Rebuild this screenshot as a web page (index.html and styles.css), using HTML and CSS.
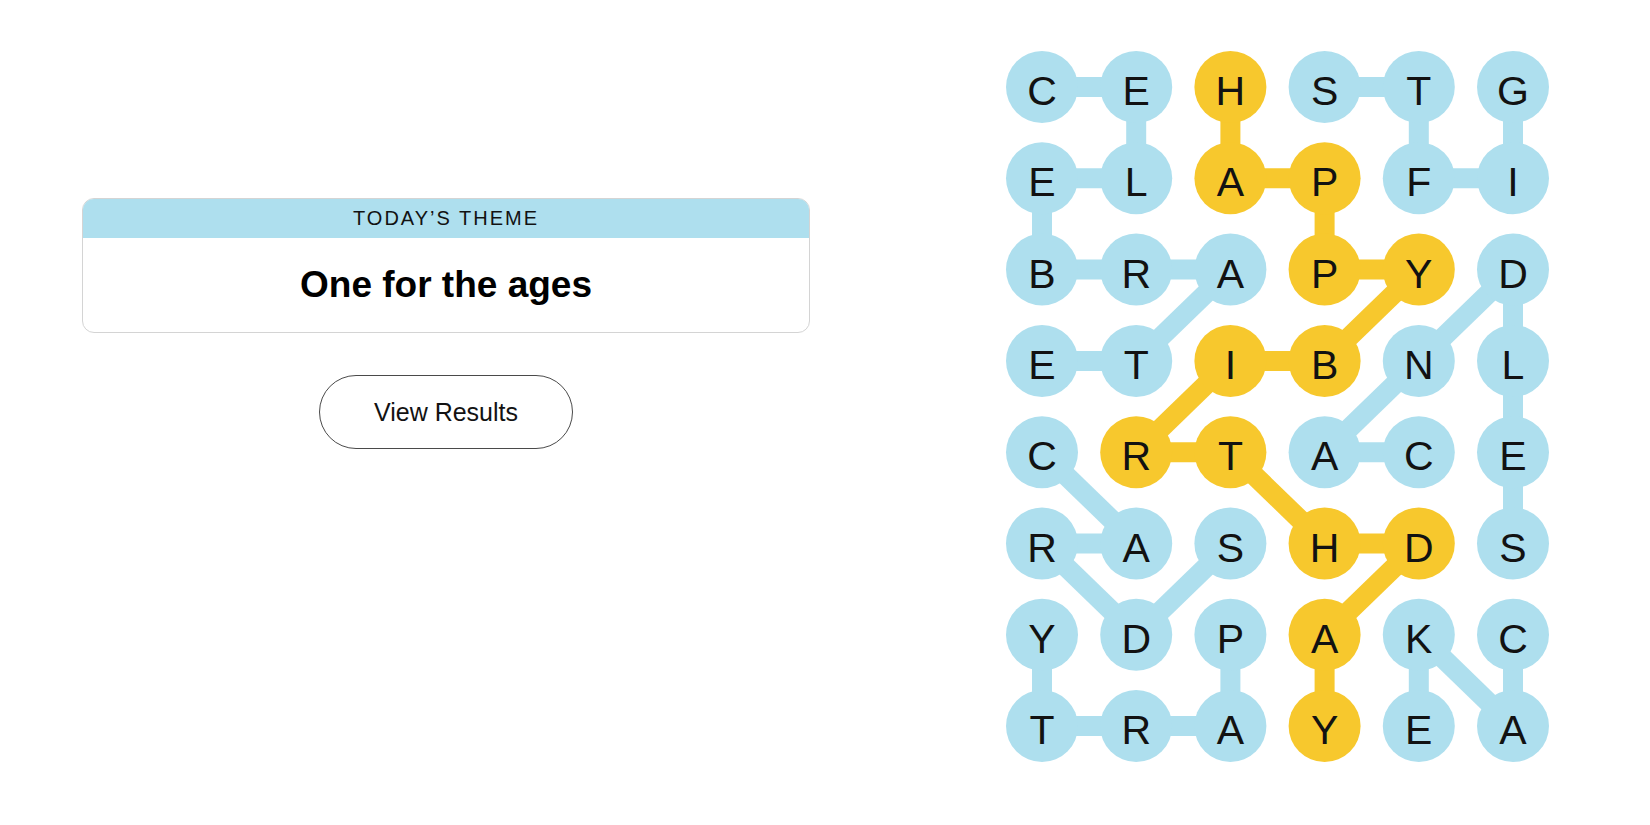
FILE: index.html
```html
<!DOCTYPE html>
<html lang="en">
<head>
<meta charset="utf-8">
<title>Strands</title>
<link rel="stylesheet" href="styles.css">
</head>
<body>
<main class="page">
  <section class="panel">
    <div class="theme-card">
      <div class="theme-head">TODAY’S THEME</div>
      <div class="theme-body">One for the ages</div>
    </div>
    <div class="actions">
      <button class="results-btn" type="button">View Results</button>
    </div>
  </section>
  <section class="board">
    <svg class="board-svg" width="560" height="730" viewBox="1000 45 560 730" xmlns="http://www.w3.org/2000/svg">
      <g class="links-blue">
        <!-- CELEBRATE -->
        <line x1="1042" y1="87" x2="1136.2" y2="87"/>
        <line x1="1136.2" y1="87" x2="1136.2" y2="178.3"/>
        <line x1="1136.2" y1="178.3" x2="1042" y2="178.3"/>
        <line x1="1042" y1="178.3" x2="1042" y2="269.6"/>
        <line x1="1042" y1="269.6" x2="1230.4" y2="269.6"/>
        <line x1="1230.4" y1="269.6" x2="1136.2" y2="360.9"/>
        <line x1="1136.2" y1="360.9" x2="1042" y2="360.9"/>
        <!-- GIFTS -->
        <line x1="1513" y1="87" x2="1513" y2="178.3"/>
        <line x1="1513" y1="178.3" x2="1418.8" y2="178.3"/>
        <line x1="1418.8" y1="178.3" x2="1418.8" y2="87"/>
        <line x1="1418.8" y1="87" x2="1324.6" y2="87"/>
        <!-- CANDLES -->
        <line x1="1418.8" y1="452.2" x2="1324.6" y2="452.2"/>
        <line x1="1324.6" y1="452.2" x2="1418.8" y2="360.9"/>
        <line x1="1418.8" y1="360.9" x2="1513" y2="269.6"/>
        <line x1="1513" y1="269.6" x2="1513" y2="543.5"/>
        <!-- CARDS -->
        <line x1="1042" y1="452.2" x2="1136.2" y2="543.5"/>
        <line x1="1136.2" y1="543.5" x2="1042" y2="543.5"/>
        <line x1="1042" y1="543.5" x2="1136.2" y2="634.8"/>
        <line x1="1136.2" y1="634.8" x2="1230.4" y2="543.5"/>
        <!-- PARTY -->
        <line x1="1230.4" y1="634.8" x2="1230.4" y2="726.1"/>
        <line x1="1230.4" y1="726.1" x2="1042" y2="726.1"/>
        <line x1="1042" y1="726.1" x2="1042" y2="634.8"/>
        <!-- CAKE -->
        <line x1="1513" y1="634.8" x2="1513" y2="726.1"/>
        <line x1="1513" y1="726.1" x2="1418.8" y2="634.8"/>
        <line x1="1418.8" y1="634.8" x2="1418.8" y2="726.1"/>
      </g>
      <g class="links-gold">
        <line x1="1230.4" y1="87" x2="1230.4" y2="178.3"/>
        <line x1="1230.4" y1="178.3" x2="1324.6" y2="178.3"/>
        <line x1="1324.6" y1="178.3" x2="1324.6" y2="269.6"/>
        <line x1="1324.6" y1="269.6" x2="1418.8" y2="269.6"/>
        <line x1="1418.8" y1="269.6" x2="1324.6" y2="360.9"/>
        <line x1="1324.6" y1="360.9" x2="1230.4" y2="360.9"/>
        <line x1="1230.4" y1="360.9" x2="1136.2" y2="452.2"/>
        <line x1="1136.2" y1="452.2" x2="1230.4" y2="452.2"/>
        <line x1="1230.4" y1="452.2" x2="1324.6" y2="543.5"/>
        <line x1="1324.6" y1="543.5" x2="1418.8" y2="543.5"/>
        <line x1="1418.8" y1="543.5" x2="1324.6" y2="634.8"/>
        <line x1="1324.6" y1="634.8" x2="1324.6" y2="726.1"/>
      </g>
      <g class="cells">
        <!-- row 0 -->
        <circle class="blue" cx="1042" cy="87" r="36"/><text x="1042" y="105">C</text>
        <circle class="blue" cx="1136.2" cy="87" r="36"/><text x="1136.2" y="105">E</text>
        <circle class="gold" cx="1230.4" cy="87" r="36"/><text x="1230.4" y="105">H</text>
        <circle class="blue" cx="1324.6" cy="87" r="36"/><text x="1324.6" y="105">S</text>
        <circle class="blue" cx="1418.8" cy="87" r="36"/><text x="1418.8" y="105">T</text>
        <circle class="blue" cx="1513" cy="87" r="36"/><text x="1513" y="105">G</text>
        <!-- row 1 -->
        <circle class="blue" cx="1042" cy="178.3" r="36"/><text x="1042" y="196.3">E</text>
        <circle class="blue" cx="1136.2" cy="178.3" r="36"/><text x="1136.2" y="196.3">L</text>
        <circle class="gold" cx="1230.4" cy="178.3" r="36"/><text x="1230.4" y="196.3">A</text>
        <circle class="gold" cx="1324.6" cy="178.3" r="36"/><text x="1324.6" y="196.3">P</text>
        <circle class="blue" cx="1418.8" cy="178.3" r="36"/><text x="1418.8" y="196.3">F</text>
        <circle class="blue" cx="1513" cy="178.3" r="36"/><text x="1513" y="196.3">I</text>
        <!-- row 2 -->
        <circle class="blue" cx="1042" cy="269.6" r="36"/><text x="1042" y="287.6">B</text>
        <circle class="blue" cx="1136.2" cy="269.6" r="36"/><text x="1136.2" y="287.6">R</text>
        <circle class="blue" cx="1230.4" cy="269.6" r="36"/><text x="1230.4" y="287.6">A</text>
        <circle class="gold" cx="1324.6" cy="269.6" r="36"/><text x="1324.6" y="287.6">P</text>
        <circle class="gold" cx="1418.8" cy="269.6" r="36"/><text x="1418.8" y="287.6">Y</text>
        <circle class="blue" cx="1513" cy="269.6" r="36"/><text x="1513" y="287.6">D</text>
        <!-- row 3 -->
        <circle class="blue" cx="1042" cy="360.9" r="36"/><text x="1042" y="378.9">E</text>
        <circle class="blue" cx="1136.2" cy="360.9" r="36"/><text x="1136.2" y="378.9">T</text>
        <circle class="gold" cx="1230.4" cy="360.9" r="36"/><text x="1230.4" y="378.9">I</text>
        <circle class="gold" cx="1324.6" cy="360.9" r="36"/><text x="1324.6" y="378.9">B</text>
        <circle class="blue" cx="1418.8" cy="360.9" r="36"/><text x="1418.8" y="378.9">N</text>
        <circle class="blue" cx="1513" cy="360.9" r="36"/><text x="1513" y="378.9">L</text>
        <!-- row 4 -->
        <circle class="blue" cx="1042" cy="452.2" r="36"/><text x="1042" y="470.2">C</text>
        <circle class="gold" cx="1136.2" cy="452.2" r="36"/><text x="1136.2" y="470.2">R</text>
        <circle class="gold" cx="1230.4" cy="452.2" r="36"/><text x="1230.4" y="470.2">T</text>
        <circle class="blue" cx="1324.6" cy="452.2" r="36"/><text x="1324.6" y="470.2">A</text>
        <circle class="blue" cx="1418.8" cy="452.2" r="36"/><text x="1418.8" y="470.2">C</text>
        <circle class="blue" cx="1513" cy="452.2" r="36"/><text x="1513" y="470.2">E</text>
        <!-- row 5 -->
        <circle class="blue" cx="1042" cy="543.5" r="36"/><text x="1042" y="561.5">R</text>
        <circle class="blue" cx="1136.2" cy="543.5" r="36"/><text x="1136.2" y="561.5">A</text>
        <circle class="blue" cx="1230.4" cy="543.5" r="36"/><text x="1230.4" y="561.5">S</text>
        <circle class="gold" cx="1324.6" cy="543.5" r="36"/><text x="1324.6" y="561.5">H</text>
        <circle class="gold" cx="1418.8" cy="543.5" r="36"/><text x="1418.8" y="561.5">D</text>
        <circle class="blue" cx="1513" cy="543.5" r="36"/><text x="1513" y="561.5">S</text>
        <!-- row 6 -->
        <circle class="blue" cx="1042" cy="634.8" r="36"/><text x="1042" y="652.8">Y</text>
        <circle class="blue" cx="1136.2" cy="634.8" r="36"/><text x="1136.2" y="652.8">D</text>
        <circle class="blue" cx="1230.4" cy="634.8" r="36"/><text x="1230.4" y="652.8">P</text>
        <circle class="gold" cx="1324.6" cy="634.8" r="36"/><text x="1324.6" y="652.8">A</text>
        <circle class="blue" cx="1418.8" cy="634.8" r="36"/><text x="1418.8" y="652.8">K</text>
        <circle class="blue" cx="1513" cy="634.8" r="36"/><text x="1513" y="652.8">C</text>
        <!-- row 7 -->
        <circle class="blue" cx="1042" cy="726.1" r="36"/><text x="1042" y="744.1">T</text>
        <circle class="blue" cx="1136.2" cy="726.1" r="36"/><text x="1136.2" y="744.1">R</text>
        <circle class="blue" cx="1230.4" cy="726.1" r="36"/><text x="1230.4" y="744.1">A</text>
        <circle class="gold" cx="1324.6" cy="726.1" r="36"/><text x="1324.6" y="744.1">Y</text>
        <circle class="blue" cx="1418.8" cy="726.1" r="36"/><text x="1418.8" y="744.1">E</text>
        <circle class="blue" cx="1513" cy="726.1" r="36"/><text x="1513" y="744.1">A</text>
      </g>
    </svg>
  </section>
</main>
</body>
</html>
```
FILE: styles.css
```css
html, body {
  margin: 0;
  padding: 0;
  background: #ffffff;
}

body {
  font-family: "Liberation Sans", Arial, sans-serif;
  color: #121212;
}

.page {
  display: flex;
  align-items: flex-start;
  width: 1650px;
  height: 825px;
  overflow: hidden;
}

.panel {
  width: 728px;
  margin: 198px 0 0 82px;
  display: flex;
  flex-direction: column;
  align-items: center;
}

.theme-card {
  width: 100%;
  box-sizing: border-box;
  border: 1px solid #d4d4d4;
  border-radius: 12px;
  overflow: hidden;
  background: #ffffff;
}

.theme-head {
  height: 39px;
  line-height: 39px;
  background: #aedfee;
  text-align: center;
  font-size: 20px;
  letter-spacing: 2px;
  color: #121212;
}

.theme-body {
  height: 94px;
  line-height: 94px;
  text-align: center;
  font-size: 37px;
  font-weight: 700;
  color: #000000;
}

.actions {
  margin-top: 42px;
}

.results-btn {
  width: 254px;
  height: 74px;
  box-sizing: border-box;
  border: 1px solid #4a4a4a;
  border-radius: 37px;
  background: #ffffff;
  font-family: "Liberation Sans", Arial, sans-serif;
  font-size: 25px;
  color: #121212;
  padding: 0;
  cursor: pointer;
}

.board {
  margin: 45px 0 0 190px;
}

.board-svg {
  display: block;
}

.links-blue line {
  stroke: #aedfee;
  stroke-width: 20;
}

.links-gold line {
  stroke: #f7c82d;
  stroke-width: 20;
}

.cells .blue {
  fill: #aedfee;
}

.cells .gold {
  fill: #f7c82d;
}

.cells text {
  font-family: "Liberation Sans", Arial, sans-serif;
  font-size: 41px;
  fill: #121212;
  text-anchor: middle;
}
```
